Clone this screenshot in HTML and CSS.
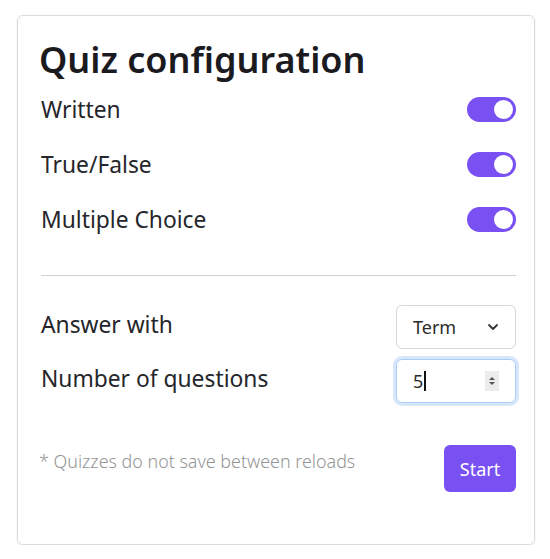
FILE: index.html
```html
<!DOCTYPE html>
<html>
<head>
<meta charset="utf-8">
<link rel="stylesheet" href="styles.css">
</head>
<body>
<div class="card">
  <h1 class="title">Quiz configuration</h1>
  <div class="toggles">
    <div class="row"><span class="label">Written</span><span class="switch"><span class="knob"></span></span></div>
    <div class="row"><span class="label">True/False</span><span class="switch"><span class="knob"></span></span></div>
    <div class="row"><span class="label">Multiple Choice</span><span class="switch"><span class="knob"></span></span></div>
  </div>
  <hr class="divider">
  <div class="fields">
    <div class="field">
      <span class="label">Answer with</span>
      <div class="select">
        <span class="value">Term</span>
        <svg class="chev" width="12" height="8" viewBox="0 0 12 8"><path d="M2 2l4 4 4-4" fill="none" stroke="#333" stroke-width="1.8" stroke-linecap="round" stroke-linejoin="round"/></svg>
      </div>
    </div>
    <div class="field">
      <span class="label">Number of questions</span>
      <div class="numinput">
        <span class="value">5</span><span class="caret"></span>
        <span class="spin"><svg width="10" height="14" viewBox="0 0 10 14"><path d="M2 6l3-3 3 3z" fill="#555"/><path d="M2 8l3 3 3-3z" fill="#555"/></svg></span>
      </div>
    </div>
  </div>
  <div class="footer">
    <span class="note">* Quizzes do not save between reloads</span>
    <button class="start">Start</button>
  </div>
</div>
</body>
</html>
```
FILE: styles.css
```css
html, body {
  margin: 0;
  padding: 0;
  background: #ffffff;
}
body {
  font-family: "Noto Sans", "Open Sans", sans-serif;
  color: #222529;
  padding: 15px 0 0 17px;
}
.card {
  box-sizing: border-box;
  width: 518px;
  height: 530px;
  border: 1px solid #dcdcdc;
  border-radius: 6px;
  box-shadow: 0 1px 3px rgba(0,0,0,0.08);
  padding: 22px 18px 0 21px;
}
.title {
  margin: 0;
  font-size: 36px;
  line-height: 44px;
  font-weight: 600;
  color: #1b1b1f;
  letter-spacing: 0;
}
.toggles {
  display: flex;
  flex-direction: column;
  padding-left: 2px;
}
.row {
  height: 55px;
  display: flex;
  align-items: center;
  justify-content: space-between;
}
.label {
  font-size: 22.8px;
  color: #25262b;
}
.switch {
  width: 49px;
  height: 25px;
  border-radius: 13px;
  background: #7950f2;
  display: flex;
  align-items: center;
  justify-content: flex-end;
  padding: 0 3px;
  box-sizing: border-box;
}
.knob {
  width: 19px;
  height: 19px;
  border-radius: 50%;
  background: #fff;
}
.divider {
  margin: 28px 0 0 2px;
  border: 0;
  border-top: 1px solid #d0d0d0;
  height: 0;
}
.fields {
  margin-top: 29px;
  display: flex;
  flex-direction: column;
  gap: 10px;
  padding-left: 2px;
}
.field {
  display: flex;
  align-items: center;
  justify-content: space-between;
  height: 44px;
}
.field .label {
  margin-top: -6px;
}
.select, .numinput {
  box-sizing: border-box;
  width: 120px;
  height: 44px;
  border: 1px solid #d6d6d6;
  border-radius: 6px;
  display: flex;
  align-items: center;
  padding: 0 16px 0 16px;
  font-size: 18px;
  color: #2b2b2b;
}
.select .value {
  flex: 1;
}
.numinput {
  border-color: #a9ccf5;
  box-shadow: 0 0 0 3px #d6e7fc;
  padding-left: 16px;
}
.caret {
  width: 1.5px;
  height: 20px;
  background: #111;
  margin-left: 1px;
}
.spin {
  margin-left: auto;
  width: 14px;
  height: 20px;
  background: #ececec;
  display: flex;
  align-items: center;
  justify-content: center;
}
.footer {
  margin-top: 42px;
  display: flex;
  justify-content: space-between;
  align-items: flex-start;
  padding-left: 0;
}
.note {
  font-size: 17.9px;
  line-height: 32px;
  color: #959595;
  font-weight: 300;
}
.start {
  width: 72px;
  height: 47px;
  border: 0;
  border-radius: 6px;
  background: #7950f2;
  color: #fff;
  font-family: inherit;
  font-size: 18px;
  padding: 0;
}
```
